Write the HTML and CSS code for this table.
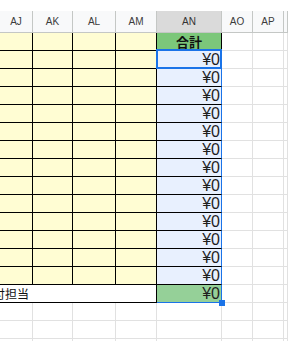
FILE: index.html
```html
<!DOCTYPE html>
<html lang="ja">
<head>
<meta charset="utf-8">
<link rel="stylesheet" href="styles.css">
</head>
<body>
<div class="sheet">
  <div class="row head">
    <div class="c h">AJ</div><div class="c h">AK</div><div class="c h">AL</div><div class="c h">AM</div><div class="c h sel">AN</div><div class="c h">AO</div><div class="c h">AP</div><div class="c h"></div>
  </div>
  <div class="row">
    <div class="c y"></div><div class="c y"></div><div class="c y"></div><div class="c y"></div><div class="c g">合計</div><div class="c w"></div><div class="c w"></div><div class="c w"></div>
  </div>
  <div class="row">
    <div class="c y"></div><div class="c y"></div><div class="c y"></div><div class="c y"></div><div class="c v act">¥0</div><div class="c w"></div><div class="c w"></div><div class="c w"></div>
  </div>
  <div class="row">
    <div class="c y"></div><div class="c y"></div><div class="c y"></div><div class="c y"></div><div class="c v">¥0</div><div class="c w"></div><div class="c w"></div><div class="c w"></div>
  </div>
  <div class="row">
    <div class="c y"></div><div class="c y"></div><div class="c y"></div><div class="c y"></div><div class="c v">¥0</div><div class="c w"></div><div class="c w"></div><div class="c w"></div>
  </div>
  <div class="row">
    <div class="c y"></div><div class="c y"></div><div class="c y"></div><div class="c y"></div><div class="c v">¥0</div><div class="c w"></div><div class="c w"></div><div class="c w"></div>
  </div>
  <div class="row">
    <div class="c y"></div><div class="c y"></div><div class="c y"></div><div class="c y"></div><div class="c v">¥0</div><div class="c w"></div><div class="c w"></div><div class="c w"></div>
  </div>
  <div class="row">
    <div class="c y"></div><div class="c y"></div><div class="c y"></div><div class="c y"></div><div class="c v">¥0</div><div class="c w"></div><div class="c w"></div><div class="c w"></div>
  </div>
  <div class="row">
    <div class="c y"></div><div class="c y"></div><div class="c y"></div><div class="c y"></div><div class="c v">¥0</div><div class="c w"></div><div class="c w"></div><div class="c w"></div>
  </div>
  <div class="row">
    <div class="c y"></div><div class="c y"></div><div class="c y"></div><div class="c y"></div><div class="c v">¥0</div><div class="c w"></div><div class="c w"></div><div class="c w"></div>
  </div>
  <div class="row">
    <div class="c y"></div><div class="c y"></div><div class="c y"></div><div class="c y"></div><div class="c v">¥0</div><div class="c w"></div><div class="c w"></div><div class="c w"></div>
  </div>
  <div class="row">
    <div class="c y"></div><div class="c y"></div><div class="c y"></div><div class="c y"></div><div class="c v">¥0</div><div class="c w"></div><div class="c w"></div><div class="c w"></div>
  </div>
  <div class="row">
    <div class="c y"></div><div class="c y"></div><div class="c y"></div><div class="c y"></div><div class="c v">¥0</div><div class="c w"></div><div class="c w"></div><div class="c w"></div>
  </div>
  <div class="row">
    <div class="c y"></div><div class="c y"></div><div class="c y"></div><div class="c y"></div><div class="c v">¥0</div><div class="c w"></div><div class="c w"></div><div class="c w"></div>
  </div>
  <div class="row">
    <div class="c y"></div><div class="c y"></div><div class="c y"></div><div class="c y"></div><div class="c v">¥0</div><div class="c w"></div><div class="c w"></div><div class="c w"></div>
  </div>
  <div class="row">
    <div class="c m"><span class="label">付担当</span></div><div class="c t">¥0<span class="handle"></span></div><div class="c w"></div><div class="c w"></div><div class="c w"></div>
  </div>
  <div class="row">
    <div class="c w"></div><div class="c w"></div><div class="c w"></div><div class="c w"></div><div class="c w"></div><div class="c w"></div><div class="c w"></div><div class="c w"></div>
  </div>
  <div class="row">
    <div class="c w"></div><div class="c w"></div><div class="c w"></div><div class="c w"></div><div class="c w"></div><div class="c w"></div><div class="c w"></div><div class="c w"></div>
  </div>
  <div class="row">
    <div class="c w"></div><div class="c w"></div><div class="c w"></div><div class="c w"></div><div class="c w"></div><div class="c w"></div><div class="c w"></div><div class="c w"></div>
  </div>
</div>
</body>
</html>
```
FILE: styles.css
```css
html, body {
  margin: 0;
  padding: 0;
  background: #ffffff;
  overflow: hidden;
}
body {
  width: 288px;
  height: 341px;
  font-family: "Liberation Sans", Arial, sans-serif;
}
.sheet {
  padding-top: 11px;
}
.row {
  display: grid;
  grid-template-columns: 33px 40px 43px 41px 65px 31px 31px 1fr;
  grid-template-rows: 18px;
  height: 18px;
}
.row.head {
  grid-template-rows: 22px;
  height: 22px;
}
.c {
  box-sizing: border-box;
  border-right: 1px solid #e1e1e1;
  border-bottom: 1px solid #e1e1e1;
  min-width: 0;
  overflow: hidden;
  white-space: nowrap;
}
.h {
  background: #f8f9fa;
  border-right-color: #c4c7c5;
  border-bottom-color: #c4c7c5;
  color: #3c3c3c;
  font-size: 10px;
  display: flex;
  align-items: center;
  justify-content: center;
}
.h.sel {
  background: #dadada;
  color: #333;
}
.y {
  background: #fffdd3;
  border-right-color: #000;
  border-bottom-color: #000;
}
.g {
  background: #7cc77a;
  border-right-color: #000;
  border-bottom-color: #000;
  font-family: "Noto Sans CJK JP", sans-serif;
  font-weight: bold;
  font-size: 13px;
  line-height: 17px;
  text-align: center;
  color: #111;
}
.v, .t {
  background: #e8f0fe;
  border-right-color: #1a73e8;
  border-bottom-color: #000;
  font-size: 16px;
  line-height: 17px;
  text-align: right;
  padding-right: 1px;
  color: #1f1f1f;
}
.t {
  background: #95d098;
  border-bottom-color: #1a73e8;
  position: relative;
  overflow: visible;
}
.act {
  position: relative;
  overflow: visible;
}
.act::after {
  content: "";
  position: absolute;
  top: -2px;
  left: -1px;
  right: -1px;
  bottom: -1px;
  border: 2px solid #1a73e8;
  pointer-events: none;
}
.handle {
  position: absolute;
  right: -4px;
  bottom: -4px;
  width: 6px;
  height: 6px;
  background: #1a73e8;
  z-index: 2;
}
.m {
  grid-column: span 4;
  background: #fff;
  border-right-color: #000;
  border-bottom-color: #000;
  font-family: "Noto Sans CJK JP", sans-serif;
  font-size: 12px;
  line-height: 17px;
  color: #111;
}
.label {
  display: block;
  margin-left: -7px;
}
.w {
  background: #fff;
}
```
